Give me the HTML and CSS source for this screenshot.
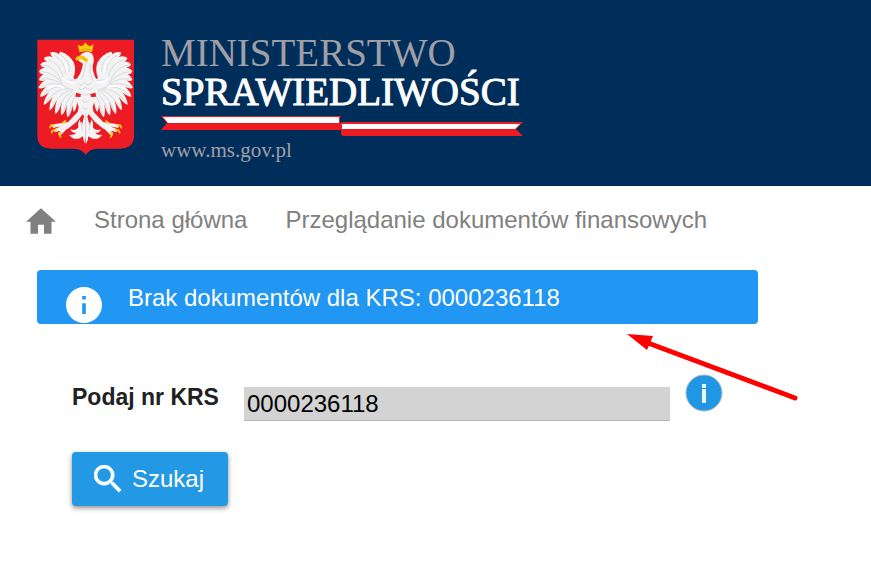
FILE: index.html
```html
<!DOCTYPE html>
<html lang="pl">
<head>
<meta charset="utf-8">
<meta name="viewport" content="width=device-width, initial-scale=1">
<title>Przeglądanie dokumentów finansowych</title>
<link rel="stylesheet" href="styles.css">
</head>
<body>
<header class="site-header">
  <svg class="emblem" viewBox="36 33 294 351" aria-hidden="true">
    <path fill="#ed1c24" d="M37 35H327V325Q326 361 286 362H218Q192 362 182 382Q172 362 146 362H78Q38 361 37 325Z"/>
    <defs>
      <g id="wing">
        <path fill="#f3f3f4" d="M182 125L160 150Q151 156 145 150Q155 124 146 103Q134 80 108 71Q101 72 103 79Q89 69 76 73Q75 80 83 87Q68 81 57 89Q57 96 68 101Q53 99 46 109Q49 118 60 119Q46 120 42 131Q47 140 57 139Q44 145 42 156Q49 162 60 157Q44 168 40 180Q49 184 63 177Q47 191 45 206Q54 208 72 193Q57 212 56 230Q67 228 83 206Q71 231 74 247Q84 242 96 215Q87 244 91 258Q102 252 111 222Q105 248 109 262Q119 258 126 229Q122 252 127 268Q139 261 142 232Q143 246 147 252Q156 240 158 210L182 212Z"/>
        <path fill="none" stroke="#d9dade" stroke-width="3" d="M108 82Q135 96 134 133M88 82Q121 98 123 140M68 95Q105 105 116 150M54 111Q91 116 110 160M49 131Q86 133 113 168M49 153Q84 147 118 174M47 178Q82 156 124 178M51 202Q85 166 130 180M62 223Q96 177 138 182M79 240Q108 188 145 184M95 251Q119 195 151 185M113 255Q131 202 157 186M130 260Q143 211 162 184M112 151Q130 159 148 157"/>
        <path fill="none" stroke="#ffffff" stroke-width="5" d="M112 149Q132 168 160 163M104 86Q126 107 126 137M67 185Q93 164 119 180"/>
        <path fill="#f1f1f2" d="M163 230L158 252L116 296L128 303L155 281L179 251Z"/>
        <path fill="none" stroke="#f4f4f5" stroke-width="10" stroke-linecap="round" d="M132 287L111 290L86 294M121 296L92 307M124 297L105 317"/>
        <path fill="none" stroke="#ffcb08" stroke-width="5" stroke-linecap="round" d="M88 291L78 292L75 299M93 305L82 308L80 314M107 313L103 321L107 327M113 285L121 279"/>
        <path fill="#f5f5f6" d="M182 245L181 348Q174 338 174 325L164 331Q145 337 132 320Q145 324 154 314Q139 316 137 304Q150 309 160 299Q157 286 164 274L170 295Z"/>
      </g>
    </defs>
    <use href="#wing"/>
    <use href="#wing" transform="matrix(-1 0 0 1 364 0)"/>
    <path fill="#f3f3f4" d="M168 79Q184 65 201 77Q211 91 203 113Q202 131 214 154L218 190L202 240L190 261L182 270L173 259L162 240L146 190L149 158Q169 141 174 107L160 98Z"/>
    <path fill="#ed1c24" d="M153 194L168 198L166 207L151 206ZM196 198L212 194L213 206L198 207Z"/>
    <path fill="none" stroke="#d6d8dc" stroke-width="3" d="M183 105Q180 132 169 154M196 108Q191 135 203 157M160 166Q169 177 178 164Q187 177 200 164M160 180Q169 190 181 178Q190 190 204 180M169 195Q181 208 195 195M171 216Q182 229 193 216M174 239Q182 247 190 238M182 257V333M169 282L172 309M195 282L192 309"/>
    <path fill="#ffcb08" d="M164 73L158 50L168 55L176 51L181 43L187 51L195 55L206 49L201 73Q182 66 164 73ZM151 92Q157 80 175 83L189 93L187 104L177 98Q167 89 154 98Z"/>
    <path fill="none" stroke="#c98a20" stroke-width="2" d="M167 66Q182 60 198 66M171 89L183 97"/>
  </svg>
  <div class="brand">
    <span class="brand-line brand-muted">MINISTERSTWO</span>
    <span class="brand-line">SPRAWIEDLIWOŚCI</span>
    <svg class="ribbon" viewBox="0 0 362 21" aria-hidden="true">
      <path fill="#ed1c24" d="M0 0H180V14H0L6 7ZM180 6H362L355 13L362 20H183Q180 20 180 17Z"/>
      <path fill="#fff" d="M2 1H178V7H7ZM181 8H359L354 13H181Z"/>
      <path stroke="#002e5b" stroke-width="1" d="M179.500 1V7"/>
    </svg>
    <span class="brand-url">www.ms.gov.pl</span>
  </div>
</header>
<nav class="breadcrumb" aria-label="Nawigacja">
  <a class="home" href="#" aria-label="Start">
    <svg viewBox="2 3 20 17" aria-hidden="true"><path fill="#808080" d="M10 20v-6h4v6h5v-8h3L12 3 2 12h3v8z"/></svg>
  </a>
  <a href="#">Strona główna</a>
  <a href="#">Przeglądanie dokumentów finansowych</a>
</nav>
<main class="content">
  <div class="message" role="status">
    <svg class="message-icon" viewBox="2 2 20 20" aria-hidden="true"><path fill="#fff" d="M12 2C6.480 2 2 6.480 2 12s4.480 10 10 10 10-4.480 10-10S17.520 2 12 2zm1 15h-2v-6h2v6zm0-8h-2V7h2v2z"/></svg>
    <span>Brak dokumentów dla KRS: 0000236118</span>
  </div>
  <form class="search">
    <div class="field">
      <label for="krs">Podaj nr KRS</label>
      <input id="krs" type="text" value="0000236118">
      <svg class="hint" viewBox="0 0 38 38" aria-hidden="true">
        <circle cx="19" cy="19" r="18" fill="#2196e3" stroke="#a9bccb" stroke-width="1"/>
        <path fill="#f1f5f8" d="M17 10h4v4h-4zM17 15h4v14h-4z"/>
      </svg>
    </div>
    <button class="submit" type="button">
      <svg viewBox="3 3 18 18" aria-hidden="true"><path fill="#fff" stroke="#fff" stroke-width=".4" d="M15.500 14h-.79l-.28-.27C15.410 12.590 16 11.110 16 9.500 16 5.910 13.090 3 9.500 3S3 5.910 3 9.500 5.910 16 9.500 16c1.610 0 3.090-.59 4.230-1.570l.27.28v.79l5 4.990L20.490 19l-4.990-5zm-6 0C7.010 14 5 11.990 5 9.500S7.010 5 9.500 5 14 7.010 14 9.500 11.990 14 9.500 14z"/></svg>
      <span>Szukaj</span>
    </button>
  </form>
  <svg class="pointer" viewBox="0 0 171 68" aria-hidden="true">
    <path stroke="#f00" stroke-width="5" stroke-linecap="round" d="M21 9L168 64"/>
    <path fill="#f00" d="M0 0L26 2L20 16Z"/>
  </svg>
</main>
</body>
</html>
```
FILE: styles.css
```css
* {
  box-sizing: border-box;
}

body {
  margin: 0;
  background: #fff;
  color: #212121;
  font: 24px/28px "Liberation Sans", Arial, sans-serif;
}

.site-header {
  display: flex;
  gap: 26px;
  padding: 33px 37px 24px;
  background: #002e5b;
  border-bottom: 1px solid #00254c;
}

.emblem {
  flex: none;
  width: 98px;
  height: 117px;
  margin-top: 6px;
}

.brand {
  display: flex;
  flex-direction: column;
  height: 128px;
  color: #fff;
  font-family: "Liberation Serif", "Times New Roman", serif;
}

.brand-line {
  font-size: 39px;
  line-height: 39px;
  -webkit-text-stroke: 1px currentColor;
}

.brand-muted {
  color: #a09fa5;
  -webkit-text-stroke: 0;
}

.ribbon {
  width: 362px;
  height: 21px;
  margin: 5px 0 3px;
}

.brand-url {
  color: #a09fa5;
  font-size: 21px;
  line-height: 21px;
}

.breadcrumb {
  display: flex;
  align-items: center;
  gap: 38px;
  padding: 20px 26px;
}

.breadcrumb a {
  color: #808080;
  text-decoration: none;
}

.home {
  display: flex;
  padding-top: 2px;
}

.home svg {
  width: 30px;
  height: 26px;
}

.content {
  position: relative;
  max-width: 795px;
  padding: 16px 37px 32px;
}

.message {
  display: flex;
  gap: 26px;
  height: 54px;
  padding: 14px 29px 0;
  border-radius: 4px;
  background: #2196f3;
  color: #fff;
}

.message-icon {
  flex: none;
  width: 36px;
  height: 36px;
  margin-top: 3px;
}

.search {
  padding: 50px 35px 0;
}

.field {
  display: flex;
  align-items: flex-start;
}

.field label {
  flex: none;
  width: 172px;
  padding-top: 9px;
  font-size: 23px;
  font-weight: bold;
}

.field input {
  flex: 1;
  min-width: 0;
  height: 34px;
  margin-top: 13px;
  padding: 0 3px;
  border: 0;
  border-bottom: 1px solid #b5b5b5;
  border-radius: 0;
  background: #d3d3d3;
  color: #000;
  font: inherit;
}

.hint {
  flex: none;
  width: 38px;
  height: 38px;
  margin-left: 15px;
}

.submit {
  display: flex;
  align-items: center;
  gap: 10px;
  margin-top: 31px;
  height: 54px;
  padding: 0 24px 0 22px;
  border: 0;
  border-radius: 4px;
  background: #2399e5;
  box-shadow: 0 2px 5px rgba(0, 0, 0, 0.45);
  color: #fff;
  font: inherit;
}

.submit svg {
  width: 28px;
  height: 28px;
}

.pointer {
  position: absolute;
  left: 627px;
  top: 80px;
  width: 171px;
  height: 68px;
}
```
